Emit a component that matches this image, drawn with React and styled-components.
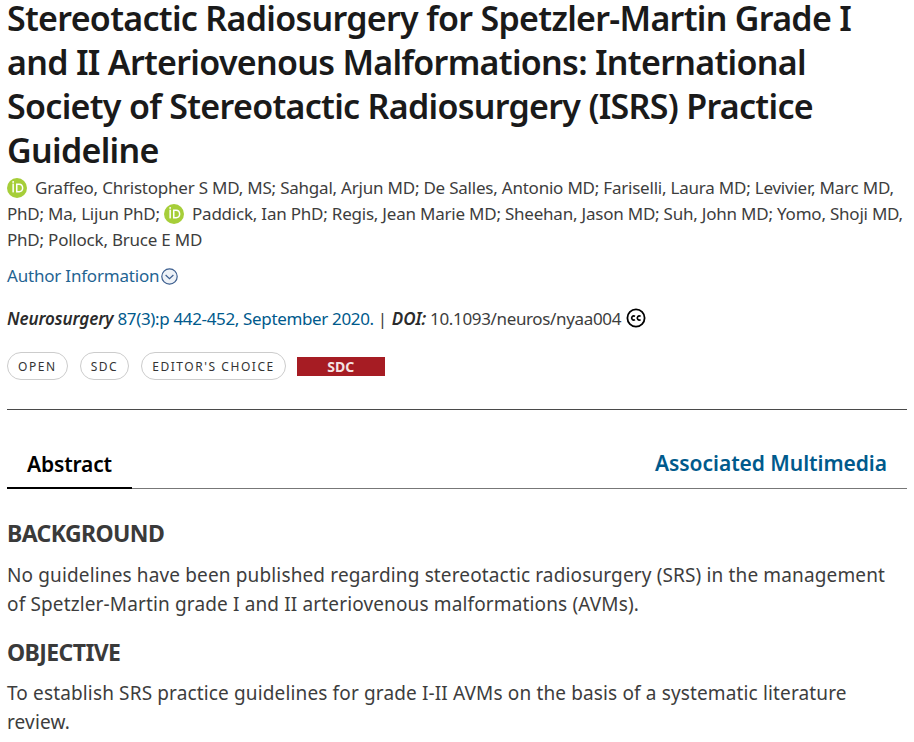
import React from 'react'
import styled, { createGlobalStyle } from 'styled-components'

const GlobalStyle = createGlobalStyle`
  html, body {
    margin: 0;
    padding: 0;
    background: #fff;
    overflow: hidden;
  }
  body {
    font-family: 'Noto Sans', 'Open Sans', sans-serif;
    color: #3a3a3a;
  }
`

const Page = styled.div`
  width: 900px;
  height: 742px;
  padding: 0 7px;
  overflow: hidden;
`

const Title = styled.h1`
  margin: 7px 0 3px;
  font-size: 34px;
  line-height: 44px;
  font-weight: 600;
  letter-spacing: -0.7px;
  color: #1a1a1a;
  text-box: trim-start cap alphabetic;
`

const Authors = styled.p`
  margin: 0 0 9px;
  font-size: 17px;
  line-height: 26px;
  letter-spacing: -0.22px;
  color: #3d3d3d;
`

const OrcidBadge = styled.svg`
  width: 20px;
  height: 20px;
  vertical-align: -4px;
  margin-right: 8px;
`

const AuthorToggle = styled.div`
  display: flex;
  align-items: center;
  height: 26px;
  margin-bottom: 17px;
  font-size: 17px;
  letter-spacing: -0.2px;
  color: #1f6492;
`

const ToggleIcon = styled.svg`
  width: 17px;
  height: 17px;
  margin: 3px 0 0 2px;
`

const Citation = styled.div`
  display: flex;
  align-items: center;
  height: 26px;
  margin-bottom: 21px;
  font-size: 17px;
  letter-spacing: -0.35px;
  color: #3d3d3d;
  white-space: nowrap;
`

const JournalName = styled.em`
  font-weight: 600;
  margin-right: 4px;
  letter-spacing: -0.1px;
  color: #2b2b2b;
`

const CiteLink = styled.span`
  color: #005a8c;
`

const Pipe = styled.span`
  margin: 0 5px 0 4px;
`

const LicenseIcon = styled.svg`
  width: 20px;
  height: 20px;
  margin-left: 5px;
`

const Badges = styled.div`
  display: flex;
  align-items: center;
  gap: 12px;
  padding-bottom: 29px;
  border-bottom: 1px solid #4a4a4a;
`

const Pill = styled.span`
  display: inline-flex;
  align-items: center;
  height: 26px;
  padding: 0 10px;
  border: 1px solid #ccc;
  border-radius: 14px;
  font-size: 12px;
  letter-spacing: 1.55px;
  color: #333;
`

const SdcFlag = styled.span`
  display: flex;
  align-items: center;
  justify-content: center;
  width: 88px;
  height: 19px;
  margin-left: -1px;
  background: #a61c23;
  color: #f4e4e4;
  font-size: 14px;
  font-weight: 700;
`

const Tabs = styled.div`
  display: flex;
  justify-content: space-between;
  align-items: flex-end;
  height: 78px;
  border-bottom: 1px solid #777;
`

const ActiveTab = styled.div`
  width: 125px;
  box-sizing: border-box;
  padding: 0 0 9px 20px;
  margin-bottom: -1px;
  border-bottom: 2px solid #000;
  font-size: 21px;
  line-height: 28px;
  font-weight: 600;
  letter-spacing: -0.15px;
  color: #000;
`

const SideTab = styled.div`
  padding: 0 20px 11px 0;
  font-size: 21px;
  line-height: 28px;
  font-weight: 600;
  letter-spacing: -0.05px;
  color: #005a8c;
`

const Heading = styled.h2`
  margin: ${p => p.$top}px 0 0;
  font-size: 23px;
  line-height: 32px;
  font-weight: 700;
  letter-spacing: -0.6px;
  color: #3a3a3a;
`

const Body = styled.p`
  max-width: 885px;
  margin: ${p => p.$top}px 0 0;
  font-size: 19px;
  line-height: 29px;
  letter-spacing: 0.14px;
  color: #3d3d3d;
`

const Orcid = () => (
  <OrcidBadge viewBox="0 0 20 20">
    <circle cx="10" cy="10" r="10" fill="#a6ce39" />
    <rect x="5.4" y="5.6" width="1.5" height="8.8" fill="#fff" />
    <circle cx="6.15" cy="3.9" r="0.95" fill="#fff" />
    <path
      d="M9 5.6h3.2c2.7 0 4.2 1.9 4.2 4.4s-1.6 4.4-4.2 4.4H9zM10.5 7v6h1.6c1.9 0 2.8-1.3 2.8-3s-.9-3-2.8-3z"
      fill="#fff"
      fillRule="evenodd"
    />
  </OrcidBadge>
)

const ChevronCircle = () => (
  <ToggleIcon viewBox="0 0 17 17">
    <circle cx="8.5" cy="8.5" r="7.7" fill="#eef2f7" stroke="#3d5f8f" strokeWidth="1.2" />
    <path d="M4.6 7l3.9 3.7L12.4 7" fill="none" stroke="#3d5f8f" strokeWidth="1.2" />
  </ToggleIcon>
)

const CcIcon = () => (
  <LicenseIcon viewBox="0 0 20 20">
    <circle cx="10" cy="10" r="8.6" fill="#fff" stroke="#000" strokeWidth="1.8" />
    <path d="M9 8.3a2.1 2.1 0 1 0 0 3.4M14.6 8.3a2.1 2.1 0 1 0 0 3.4" fill="none" stroke="#000" strokeWidth="1.6" />
  </LicenseIcon>
)

export default function App() {
  return (
    <Page>
      <GlobalStyle />
      <Title>
        Stereotactic Radiosurgery for Spetzler-Martin Grade I and II Arteriovenous Malformations: International
        Society of Stereotactic Radiosurgery (ISRS) Practice Guideline
      </Title>
      <Authors>
        <Orcid />
        Graffeo, Christopher S MD, MS; Sahgal, Arjun MD; De Salles, Antonio MD; Fariselli, Laura MD; Levivier, Marc
        MD, PhD; Ma, Lijun PhD; <Orcid />
        Paddick, Ian PhD; Regis, Jean Marie MD; Sheehan, Jason MD; Suh, John MD; Yomo, Shoji MD, PhD; Pollock, Bruce E
        MD
      </Authors>
      <AuthorToggle>
        Author Information
        <ChevronCircle />
      </AuthorToggle>
      <Citation>
        <JournalName>Neurosurgery</JournalName>
        <CiteLink>87(3):p 442-452, September 2020.</CiteLink>
        <Pipe>|</Pipe>
        <JournalName>DOI:</JournalName>
        10.1093/neuros/nyaa004
        <CcIcon />
      </Citation>
      <Badges>
        <Pill>OPEN</Pill>
        <Pill>SDC</Pill>
        <Pill>EDITOR'S CHOICE</Pill>
        <SdcFlag>SDC</SdcFlag>
      </Badges>
      <Tabs>
        <ActiveTab>Abstract</ActiveTab>
        <SideTab>Associated Multimedia</SideTab>
      </Tabs>
      <Heading $top={28}>BACKGROUND</Heading>
      <Body $top={12}>
        No guidelines have been published regarding stereotactic radiosurgery (SRS) in the management of
        Spetzler-Martin grade I and II arteriovenous malformations (AVMs).
      </Body>
      <Heading $top={17}>OBJECTIVE</Heading>
      <Body $top={11}>
        To establish SRS practice guidelines for grade I-II AVMs on the basis of a systematic literature review.
      </Body>
    </Page>
  )
}
